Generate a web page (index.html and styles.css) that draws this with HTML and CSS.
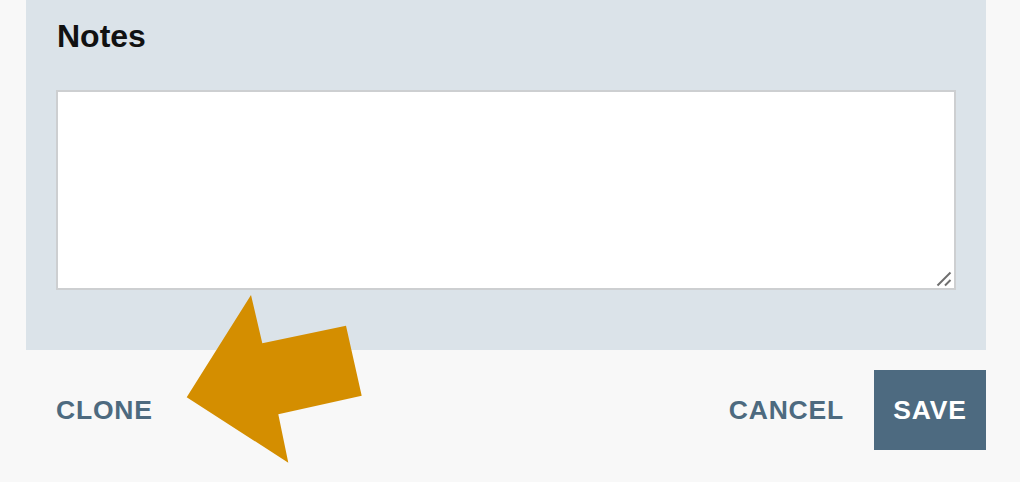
FILE: index.html
```html
<!DOCTYPE html>
<html lang="en">
<head>
<meta charset="utf-8">
<title>Notes</title>
<link rel="stylesheet" href="styles.css">
</head>
<body>
<div class="page">
  <section class="panel">
    <h2 class="panel-title">Notes</h2>
    <div class="field">
      <textarea class="notes-input" aria-label="Notes"></textarea>
      <svg class="grip" width="16" height="16" viewBox="0 0 16 16" aria-hidden="true">
        <line x1="1.5" y1="14.5" x2="14.5" y2="1.5"/>
        <line x1="9" y1="14.5" x2="14.5" y2="9"/>
      </svg>
    </div>
  </section>
  <footer class="actions">
    <button class="btn btn-text" type="button">CLONE</button>
    <div class="actions-end">
      <button class="btn btn-text" type="button">CANCEL</button>
      <button class="btn btn-primary" type="button">SAVE</button>
    </div>
  </footer>
  <svg class="callout" width="1020" height="482" viewBox="0 0 1020 482" aria-hidden="true">
    <polygon points="186.7,397.3 251,295 262.3,343.3 346,325.7 361.7,395.7 278.3,414.3 288.3,462.7"/>
  </svg>
</div>
</body>
</html>
```

FILE: styles.css
```css
* {
  box-sizing: border-box;
}

html,
body {
  margin: 0;
  background: #f8f8f8;
}

body {
  font-family: "Liberation Sans", Arial, Helvetica, sans-serif;
}

.page {
  position: relative;
  width: 1020px;
  height: 482px;
  padding: 0 34px 0 26px;
  overflow: hidden;
}

.panel {
  background: #dbe3e9;
  padding: 18px 30px 60px;
}

.panel-title {
  margin: 0 0 35px 1px;
  font-size: 32px;
  line-height: 37px;
  font-weight: 700;
  color: #111111;
}

.field {
  position: relative;
}

.notes-input {
  display: block;
  width: 900px;
  height: 200px;
  margin: 0;
  border: 2px solid #cdcfd1;
  background: #ffffff;
  resize: none;
  font: inherit;
  outline: none;
}

.grip {
  position: absolute;
  right: 4px;
  bottom: 3px;
  stroke: #6e6e6e;
  stroke-width: 2;
  stroke-linecap: butt;
}

.actions {
  display: flex;
  justify-content: space-between;
  align-items: center;
  padding-top: 20px;
}

.actions-end {
  display: flex;
  align-items: center;
}

.btn {
  height: 80px;
  border: 0;
  margin: 0;
  font-family: inherit;
  font-size: 26.5px;
  font-weight: 700;
  letter-spacing: 0.8px;
  cursor: pointer;
}

.btn-text {
  padding: 0 30px;
  background: transparent;
  color: #4d6a7f;
}

.btn-primary {
  width: 112px;
  padding: 0;
  background: #4d6a80;
  color: #ffffff;
  text-align: center;
}

.callout {
  position: absolute;
  left: 0;
  top: 0;
  pointer-events: none;
  fill: #d48e00;
}
```
